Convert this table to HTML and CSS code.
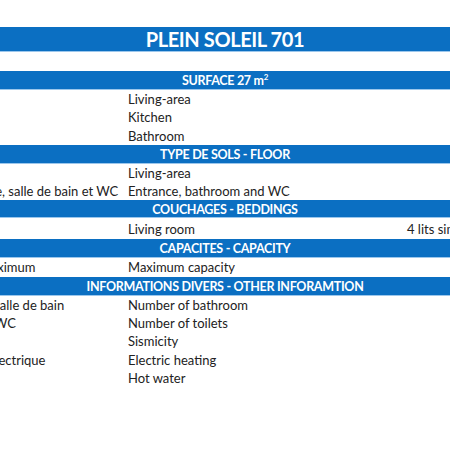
FILE: index.html
```html
<!DOCTYPE html>
<html>
<head>
<meta charset="utf-8">
<link rel="stylesheet" href="styles.css">
</head>
<body>
<div class="sheet">
  <div class="title bar">PLEIN SOLEIL 701</div>
  <div class="gap"></div>

  <div class="head bar">SURFACE 27 m<sup>2</sup></div>
  <div class="row"><span class="fr">Séjour</span><span class="en">Living-area</span><span class="val"></span></div>
  <div class="row"><span class="fr">Cuisine</span><span class="en">Kitchen</span><span class="val"></span></div>
  <div class="row"><span class="fr">SDB</span><span class="en">Bathroom</span><span class="val"></span></div>

  <div class="head bar">TYPE DE SOLS - FLOOR</div>
  <div class="row"><span class="fr">Séjour</span><span class="en">Living-area</span><span class="val"></span></div>
  <div class="row"><span class="fr">Dalles entrée, salle de bain et WC</span><span class="en">Entrance, bathroom and WC</span><span class="val"></span></div>

  <div class="head bar short">COUCHAGES - BEDDINGS</div>
  <div class="row tall"><span class="fr">Séjour</span><span class="en">Living room</span><span class="val">4 lits simples</span></div>

  <div class="head bar">CAPACITES - CAPACITY</div>
  <div class="row"><span class="fr">Capacité maximum</span><span class="en">Maximum capacity</span><span class="val"></span></div>

  <div class="head bar">INFORMATIONS DIVERS - OTHER INFORAMTION</div>
  <div class="row"><span class="fr">Nombre de salle de bain</span><span class="en">Number of bathroom</span><span class="val"></span></div>
  <div class="row"><span class="fr">Nombre de WC</span><span class="en">Number of toilets</span><span class="val"></span></div>
  <div class="row"><span class="fr">Sismicité</span><span class="en">Sismicity</span><span class="val"></span></div>
  <div class="row"><span class="fr">Chauffage électrique</span><span class="en">Electric heating</span><span class="val"></span></div>
  <div class="row"><span class="fr">Eau chaude</span><span class="en">Hot water</span><span class="val"></span></div>
</div>
</body>
</html>
```
FILE: styles.css
```css
html, body {
  margin: 0;
  padding: 0;
  background: #ffffff;
  overflow: hidden;
}
body {
  width: 450px;
  height: 450px;
  font-family: Lato, "Open Sans", sans-serif;
  color: #222222;
}
.sheet {
  margin: 27px 0 0 -73px;
  width: 596px;
  display: flex;
  flex-direction: column;
}
.bar {
  background: #0b6fc2;
  color: #ffffff;
  font-weight: 700;
  text-align: center;
  border-bottom: 1px solid #9cc7ec;
  box-sizing: border-box;
}
.title {
  height: 25px;
  font-size: 20px;
  letter-spacing: -0.4px;
  line-height: 24px;
}
.gap {
  height: 19px;
}
.head {
  height: 19px;
  font-size: 12.5px;
  letter-spacing: -0.3px;
  line-height: 20px;
}
.head.short {
  height: 18px;
  line-height: 19px;
}
.head sup {
  font-size: 8px;
  line-height: 0;
  vertical-align: 5px;
}
.row {
  height: 18.3px;
  display: grid;
  grid-template-columns: 201px 276px 119px;
  font-size: 13px;
  line-height: 18px;
  white-space: nowrap;
}
.row.tall {
  height: 21px;
  line-height: 22px;
}
.fr, .en, .val {
  overflow: hidden;
}
.val {
  padding-left: 3px;
}
```
